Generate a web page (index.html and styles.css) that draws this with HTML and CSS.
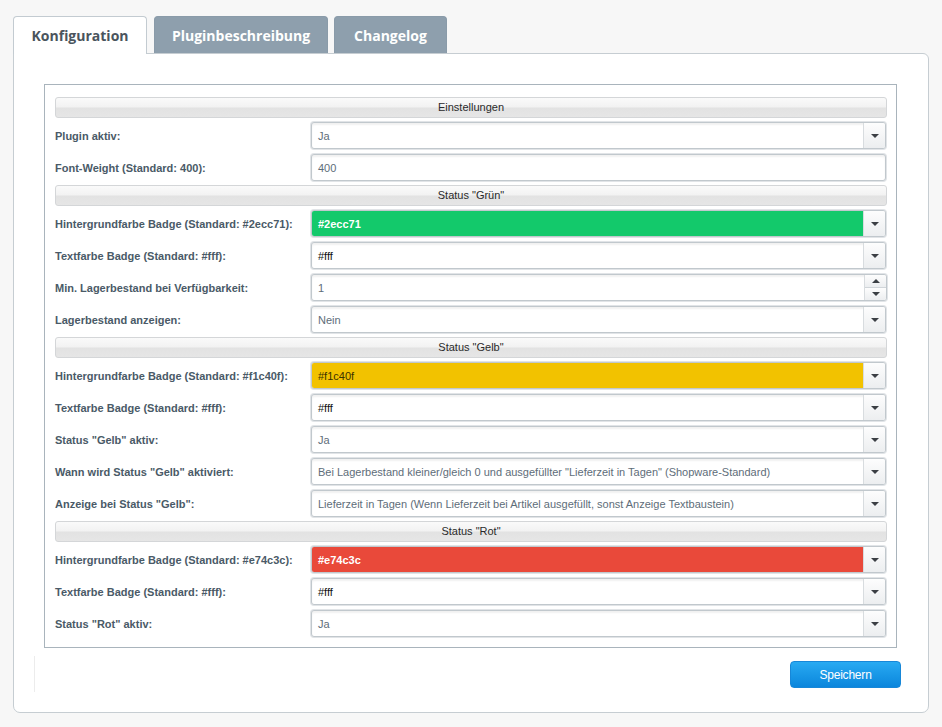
FILE: index.html
```html
<!DOCTYPE html>
<html lang="de">
<head>
<meta charset="utf-8">
<title>Konfiguration</title>
<link rel="stylesheet" href="styles.css">
</head>
<body>
<div class="page">
  <div class="tabs">
    <div class="tab tab-active tab-config">Konfiguration</div>
    <div class="tab tab-desc">Pluginbeschreibung</div>
    <div class="tab tab-log">Changelog</div>
  </div>
  <div class="panel">
    <div class="fieldset">
      <div class="section">Einstellungen</div>
      <div class="row"><div class="label">Plugin aktiv:</div><div class="field combo"><div class="value muted">Ja</div><div class="trigger"><span class="arrow-down"></span></div></div></div>
      <div class="row"><div class="label">Font-Weight (Standard: 400):</div><div class="field"><div class="value muted">400</div></div></div>

      <div class="section">Status "Grün"</div>
      <div class="row"><div class="label">Hintergrundfarbe Badge (Standard: #2ecc71):</div><div class="field combo"><div class="value swatch green">#2ecc71</div><div class="trigger"><span class="arrow-down"></span></div></div></div>
      <div class="row"><div class="label">Textfarbe Badge (Standard: #fff):</div><div class="field combo"><div class="value">#fff</div><div class="trigger"><span class="arrow-down"></span></div></div></div>
      <div class="row"><div class="label">Min. Lagerbestand bei Verfügbarkeit:</div><div class="field number"><div class="value muted">1</div><div class="spinner"><div class="spin"><span class="arrow-up"></span></div><div class="spin"><span class="arrow-down"></span></div></div></div></div>
      <div class="row"><div class="label">Lagerbestand anzeigen:</div><div class="field combo"><div class="value muted">Nein</div><div class="trigger"><span class="arrow-down"></span></div></div></div>

      <div class="section">Status "Gelb"</div>
      <div class="row"><div class="label">Hintergrundfarbe Badge (Standard: #f1c40f):</div><div class="field combo"><div class="value swatch yellow">#f1c40f</div><div class="trigger"><span class="arrow-down"></span></div></div></div>
      <div class="row"><div class="label">Textfarbe Badge (Standard: #fff):</div><div class="field combo"><div class="value">#fff</div><div class="trigger"><span class="arrow-down"></span></div></div></div>
      <div class="row"><div class="label">Status "Gelb" aktiv:</div><div class="field combo"><div class="value muted">Ja</div><div class="trigger"><span class="arrow-down"></span></div></div></div>
      <div class="row"><div class="label">Wann wird Status "Gelb" aktiviert:</div><div class="field combo"><div class="value muted">Bei Lagerbestand kleiner/gleich 0 und ausgefüllter "Lieferzeit in Tagen" (Shopware-Standard)</div><div class="trigger"><span class="arrow-down"></span></div></div></div>
      <div class="row"><div class="label">Anzeige bei Status "Gelb":</div><div class="field combo"><div class="value muted">Lieferzeit in Tagen (Wenn Lieferzeit bei Artikel ausgefüllt, sonst Anzeige Textbaustein)</div><div class="trigger"><span class="arrow-down"></span></div></div></div>

      <div class="section">Status "Rot"</div>
      <div class="row"><div class="label">Hintergrundfarbe Badge (Standard: #e74c3c):</div><div class="field combo"><div class="value swatch red">#e74c3c</div><div class="trigger"><span class="arrow-down"></span></div></div></div>
      <div class="row"><div class="label">Textfarbe Badge (Standard: #fff):</div><div class="field combo"><div class="value">#fff</div><div class="trigger"><span class="arrow-down"></span></div></div></div>
      <div class="row"><div class="label">Status "Rot" aktiv:</div><div class="field combo"><div class="value muted">Ja</div><div class="trigger"><span class="arrow-down"></span></div></div></div>
    </div>
    <div class="footer">
      <div class="divider"></div>
      <button class="save" type="button">Speichern</button>
    </div>
  </div>
</div>
</body>
</html>
```

FILE: styles.css
```css
* { box-sizing: border-box; }
html, body { margin: 0; padding: 0; }
body {
  background: #f7f7f7;
  font-family: "Liberation Sans", Arial, sans-serif;
  font-size: 11px;
  color: #222;
  width: 942px;
  height: 727px;
  overflow: hidden;
}
.page { padding: 16px 13px 0 13px; }

.tabs { display: flex; height: 37px; }
.tab {
  height: 37px;
  margin-right: 6px;
  background: #8e9fad;
  color: #fff;
  font-family: "Open Sans", sans-serif;
  font-weight: 700;
  font-size: 14px;
  display: flex;
  align-items: center;
  justify-content: center;
  border-radius: 4px 4px 0 0;
  border: 1px solid #8a9ba9;
  border-bottom: none;
}
.tab-config { width: 134px; margin-right: 7px; }
.tab-desc { width: 174px; }
.tab-log { width: 113px; }
.tab-active {
  background: #fff;
  color: #4a545d;
  border-color: #c3cbd1;
  height: 38px;
  margin-bottom: -1px;
  position: relative;
  z-index: 1;
}

.panel {
  background: #fff;
  border: 1px solid #c6cdd2;
  border-radius: 0 6px 7px 7px;
  padding: 30px 31px 23px 30px;
  height: 660px;
}

.fieldset {
  border: 1px solid #a9b4bc;
  padding: 12px 9px 6px 10px;
}

.section {
  height: 21px;
  margin-bottom: 3px;
  border: 1px solid #d4d6d8;
  border-radius: 3px;
  background: linear-gradient(to bottom, #fafafa 0%, #f2f2f2 48%, #e2e2e2 52%, #e6e6e6 100%);
  text-align: center;
  line-height: 19px;
  color: #2a2a2a;
}

.row {
  display: flex;
  align-items: center;
  height: 29px;
  margin-bottom: 3px;
}
.label {
  width: 256px;
  flex: none;
  font-weight: 700;
  color: #4a5a67;
  padding-top: 1px;
}
.field {
  flex: 1;
  height: 27px;
  margin-right: 1px;
  display: flex;
  border: 1px solid #c1c8cd;
  border-radius: 3px;
  box-shadow: 0 0 0 1px #e1e4e7, inset 0 2px 2px rgba(0,0,0,0.06);
  background: #fff;
  overflow: hidden;
}
.value {
  flex: 1;
  padding: 0 6px;
  display: flex;
  align-items: center;
  color: #111;
  white-space: nowrap;
  overflow: hidden;
}
.muted { color: #5e6d79; }
.swatch { color: #fff; font-weight: 700; }
.green { background: #13c96b; }
.yellow { background: #f2c200; color: #3a3200; font-weight: 400; }
.red { background: #e9493a; }

.trigger {
  width: 22px;
  flex: none;
  border-left: 1px solid #d8dcdf;
  background: linear-gradient(to bottom, #fdfdfd, #eceef0);
  display: flex;
  align-items: center;
  justify-content: center;
}
.arrow-down {
  width: 0; height: 0;
  border-left: 4px solid transparent;
  border-right: 4px solid transparent;
  border-top: 4px solid #3b3f44;
}
.arrow-up {
  width: 0; height: 0;
  border-left: 4px solid transparent;
  border-right: 4px solid transparent;
  border-bottom: 4px solid #3b3f44;
}
.number { margin-right: 0; }
.spinner {
  width: 22px;
  flex: none;
  display: flex;
  flex-direction: column;
  border-left: 1px solid #d8dcdf;
}
.spin {
  flex: 1;
  display: flex;
  align-items: center;
  justify-content: center;
  background: linear-gradient(to bottom, #fdfdfd, #eceef0);
}
.spin + .spin { border-top: 1px solid #d0d5d9; }

.footer {
  display: flex;
  align-items: flex-start;
  margin-top: 13px;
  margin-right: -4px;
}
.divider {
  width: 1px;
  height: 36px;
  margin-left: -10px;
  margin-top: -5px;
  background: #ececec;
}
.save {
  margin-left: auto;
  width: 111px;
  height: 27px;
  border: 1px solid #1787d8;
  border-radius: 4px;
  background: linear-gradient(to bottom, #28aaf2, #0b86dc);
  color: #fff;
  font-family: "Liberation Sans", Arial, sans-serif;
  font-size: 12px;
  padding: 0;
  letter-spacing: -0.2px;
}
```
